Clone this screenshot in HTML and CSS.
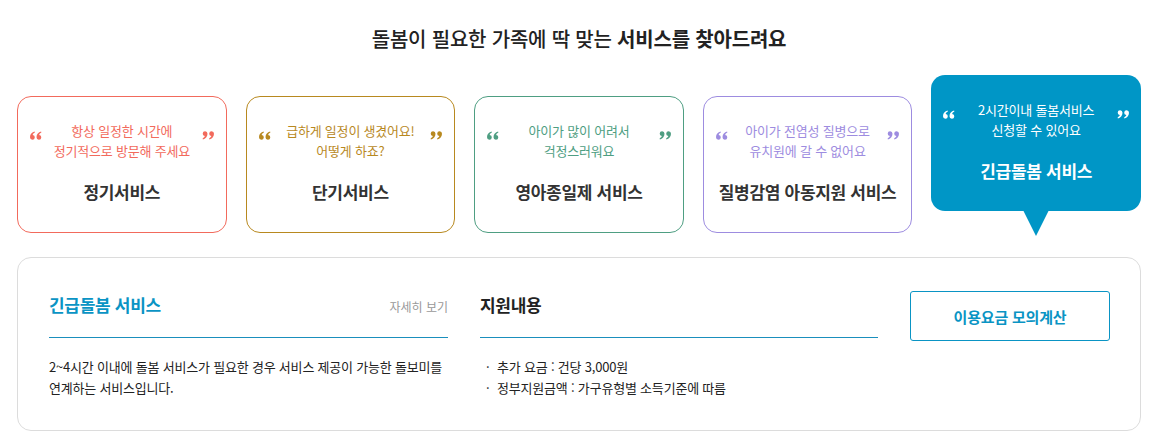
FILE: index.html
```html
<!DOCTYPE html>
<html lang="ko">
<head>
<meta charset="utf-8">
<title>돌봄 서비스</title>
<link rel="stylesheet" href="styles.css">
</head>
<body>
<div class="wrap">
  <h2 class="headline"><span class="md">돌봄이 필요한 가족에 딱 맞는</span> <strong>서비스를 찾아드려요</strong></h2>
  <div class="cards">
    <div class="card c1">
      <div class="quote">
        <svg class="qm" viewBox="0 0 12 9"><path d="M4.6 0.6C2 1.3 0 3.2 0 6.3A2.4 2.4 0 1 0 2.7 3.9C2.9 2.9 3.7 2.1 4.9 1.6Z M11.1 0.6C8.5 1.3 6.5 3.2 6.5 6.3A2.4 2.4 0 1 0 9.2 3.9C9.4 2.9 10.2 2.1 11.4 1.6Z"/></svg>
        <p>항상 일정한 시간에<br>정기적으로 방문해 주세요</p>
        <svg class="qm" viewBox="0 0 12 9"><path transform="rotate(180 6 4.5)" d="M4.6 0.6C2 1.3 0 3.2 0 6.3A2.4 2.4 0 1 0 2.7 3.9C2.9 2.9 3.7 2.1 4.9 1.6Z M11.1 0.6C8.5 1.3 6.5 3.2 6.5 6.3A2.4 2.4 0 1 0 9.2 3.9C9.4 2.9 10.2 2.1 11.4 1.6Z"/></svg>
      </div>
      <div class="name">정기서비스</div>
    </div>
    <div class="card c2">
      <div class="quote">
        <svg class="qm" viewBox="0 0 12 9"><path d="M4.6 0.6C2 1.3 0 3.2 0 6.3A2.4 2.4 0 1 0 2.7 3.9C2.9 2.9 3.7 2.1 4.9 1.6Z M11.1 0.6C8.5 1.3 6.5 3.2 6.5 6.3A2.4 2.4 0 1 0 9.2 3.9C9.4 2.9 10.2 2.1 11.4 1.6Z"/></svg>
        <p>급하게 일정이 생겼어요!<br>어떻게 하죠?</p>
        <svg class="qm" viewBox="0 0 12 9"><path transform="rotate(180 6 4.5)" d="M4.6 0.6C2 1.3 0 3.2 0 6.3A2.4 2.4 0 1 0 2.7 3.9C2.9 2.9 3.7 2.1 4.9 1.6Z M11.1 0.6C8.5 1.3 6.5 3.2 6.5 6.3A2.4 2.4 0 1 0 9.2 3.9C9.4 2.9 10.2 2.1 11.4 1.6Z"/></svg>
      </div>
      <div class="name">단기서비스</div>
    </div>
    <div class="card c3">
      <div class="quote">
        <svg class="qm" viewBox="0 0 12 9"><path d="M4.6 0.6C2 1.3 0 3.2 0 6.3A2.4 2.4 0 1 0 2.7 3.9C2.9 2.9 3.7 2.1 4.9 1.6Z M11.1 0.6C8.5 1.3 6.5 3.2 6.5 6.3A2.4 2.4 0 1 0 9.2 3.9C9.4 2.9 10.2 2.1 11.4 1.6Z"/></svg>
        <p>아이가 많이 어려서<br>걱정스러워요</p>
        <svg class="qm" viewBox="0 0 12 9"><path transform="rotate(180 6 4.5)" d="M4.6 0.6C2 1.3 0 3.2 0 6.3A2.4 2.4 0 1 0 2.7 3.9C2.9 2.9 3.7 2.1 4.9 1.6Z M11.1 0.6C8.5 1.3 6.5 3.2 6.5 6.3A2.4 2.4 0 1 0 9.2 3.9C9.4 2.9 10.2 2.1 11.4 1.6Z"/></svg>
      </div>
      <div class="name">영아종일제 서비스</div>
    </div>
    <div class="card c4">
      <div class="quote">
        <svg class="qm" viewBox="0 0 12 9"><path d="M4.6 0.6C2 1.3 0 3.2 0 6.3A2.4 2.4 0 1 0 2.7 3.9C2.9 2.9 3.7 2.1 4.9 1.6Z M11.1 0.6C8.5 1.3 6.5 3.2 6.5 6.3A2.4 2.4 0 1 0 9.2 3.9C9.4 2.9 10.2 2.1 11.4 1.6Z"/></svg>
        <p>아이가 전염성 질병으로<br>유치원에 갈 수 없어요</p>
        <svg class="qm" viewBox="0 0 12 9"><path transform="rotate(180 6 4.5)" d="M4.6 0.6C2 1.3 0 3.2 0 6.3A2.4 2.4 0 1 0 2.7 3.9C2.9 2.9 3.7 2.1 4.9 1.6Z M11.1 0.6C8.5 1.3 6.5 3.2 6.5 6.3A2.4 2.4 0 1 0 9.2 3.9C9.4 2.9 10.2 2.1 11.4 1.6Z"/></svg>
      </div>
      <div class="name">질병감염 아동지원 서비스</div>
    </div>
    <div class="card c5 active">
      <div class="quote">
        <svg class="qm" viewBox="0 0 12 9"><path d="M4.6 0.6C2 1.3 0 3.2 0 6.3A2.4 2.4 0 1 0 2.7 3.9C2.9 2.9 3.7 2.1 4.9 1.6Z M11.1 0.6C8.5 1.3 6.5 3.2 6.5 6.3A2.4 2.4 0 1 0 9.2 3.9C9.4 2.9 10.2 2.1 11.4 1.6Z"/></svg>
        <p>2시간이내 돌봄서비스<br>신청할 수 있어요</p>
        <svg class="qm" viewBox="0 0 12 9"><path transform="rotate(180 6 4.5)" d="M4.6 0.6C2 1.3 0 3.2 0 6.3A2.4 2.4 0 1 0 2.7 3.9C2.9 2.9 3.7 2.1 4.9 1.6Z M11.1 0.6C8.5 1.3 6.5 3.2 6.5 6.3A2.4 2.4 0 1 0 9.2 3.9C9.4 2.9 10.2 2.1 11.4 1.6Z"/></svg>
      </div>
      <div class="name">긴급돌봄 서비스</div>
    </div>
  </div>
  <div class="panel">
    <div class="sec sec-desc">
      <div class="sec-head">
        <h3 class="sec-title blue">긴급돌봄 서비스</h3>
        <a class="more" href="#">자세히 보기</a>
      </div>
      <p class="desc">2~4시간 이내에 돌봄 서비스가 필요한 경우 서비스 제공이 가능한 돌보미를<br>연계하는 서비스입니다.</p>
    </div>
    <div class="sec sec-info">
      <div class="sec-head">
        <h3 class="sec-title">지원내용</h3>
      </div>
      <ul class="list">
        <li>추가 요금 : 건당 3,000원</li>
        <li>정부지원금액 : 가구유형별 소득기준에 따름</li>
      </ul>
    </div>
    <div class="sec-btn">
      <a class="btn" href="#">이용요금 모의계산</a>
    </div>
  </div>
</div>
</body>
</html>
```
FILE: styles.css
```css
* { box-sizing: border-box; }
html, body { margin: 0; padding: 0; background: #fff; }
body {
  font-family: "Noto Sans CJK KR", "Noto Sans", sans-serif;
  color: #222;
}
.wrap {
  width: 1124px;
  margin: 0 auto;
}
.headline {
  margin: 0;
  padding-top: 24px;
  height: 75px;
  text-align: center;
  font-size: 20px;
  line-height: 30px;
  color: #222;
  letter-spacing: -0.2px;
}
.headline .md { font-weight: 500; }
.headline strong { font-weight: 700; }

.cards {
  display: flex;
  gap: 19px;
  align-items: flex-start;
}
.card {
  position: relative;
  width: 210px;
  height: 137px;
  margin-top: 21px;
  border: 1px solid;
  border-radius: 14px;
  background: #fff;
  padding-top: 24px;
  text-align: center;
}
.card.active { margin-top: 0; height: 136px; border: none; background: #0096c6; padding-top: 25px; }
.card.active::after {
  content: "";
  position: absolute;
  left: 50%;
  bottom: -25px;
  margin-left: -13px;
  border-left: 13px solid transparent;
  border-right: 13px solid transparent;
  border-top: 26px solid #0096c6;
}
.quote {
  display: flex;
  align-items: flex-start;
  justify-content: space-between;
  padding: 0 12px;
}
.quote p {
  margin: 0;
  font-size: 13px;
  line-height: 20px;
  letter-spacing: -0.2px;
  flex: 1;
}
.qm {
  flex: none;
  width: 12px;
  height: 9px;
  margin-top: 10px;
  fill: currentColor;
}
.name {
  margin-top: 18px;
  font-size: 17px;
  line-height: 26px;
  font-weight: 700;
  color: #333;
  letter-spacing: -0.3px;
}
.c1 { border-color: #f26a5c; color: #f26a5c; }
.c2 { border-color: #b8891f; color: #b8891f; }
.c3 { border-color: #4e9e82; color: #4e9e82; }
.c4 { border-color: #9d8ce0; color: #9d8ce0; }
.c5 { color: #fff; }
.c5 .name { color: #fff; }

.panel {
  margin-top: 24px;
  border: 1px solid #dcdcdc;
  border-radius: 14px;
  display: flex;
  gap: 32px;
  padding: 32px 30px 32px 31px;
  height: 174px;
}
.sec { width: 399px; }
.sec-info { width: 398px; }
.sec-head {
  display: flex;
  justify-content: space-between;
  align-items: baseline;
  height: 48px;
  border-bottom: 1px solid #1a8fbd;
  padding-top: 2px;
}
.sec-title {
  margin: 0;
  font-size: 17px;
  line-height: 26px;
  font-weight: 700;
  color: #222;
  letter-spacing: -0.3px;
}
.sec-title.blue { color: #0a94c4; }
.more {
  font-size: 12px;
  color: #999;
  text-decoration: none;
}
.desc {
  margin: 18px 0 0;
  font-size: 13px;
  line-height: 21px;
  color: #222;
  letter-spacing: -0.2px;
}
.list {
  list-style: none;
  margin: 18px 0 0;
  padding: 0;
  font-size: 13px;
  line-height: 21px;
  color: #222;
  letter-spacing: -0.2px;
}
.list li { position: relative; padding-left: 17px; }
.list li::before {
  content: "·";
  position: absolute;
  left: 6px;
  top: 0;
}
.sec-btn { width: 200px; }
.btn {
  display: flex;
  align-items: center;
  justify-content: center;
  height: 50px;
  margin-top: 1px;
  border: 1px solid #0a94c4;
  border-radius: 3px;
  color: #0a94c4;
  font-size: 15px;
  font-weight: 700;
  text-decoration: none;
  letter-spacing: -0.2px;
}
```
